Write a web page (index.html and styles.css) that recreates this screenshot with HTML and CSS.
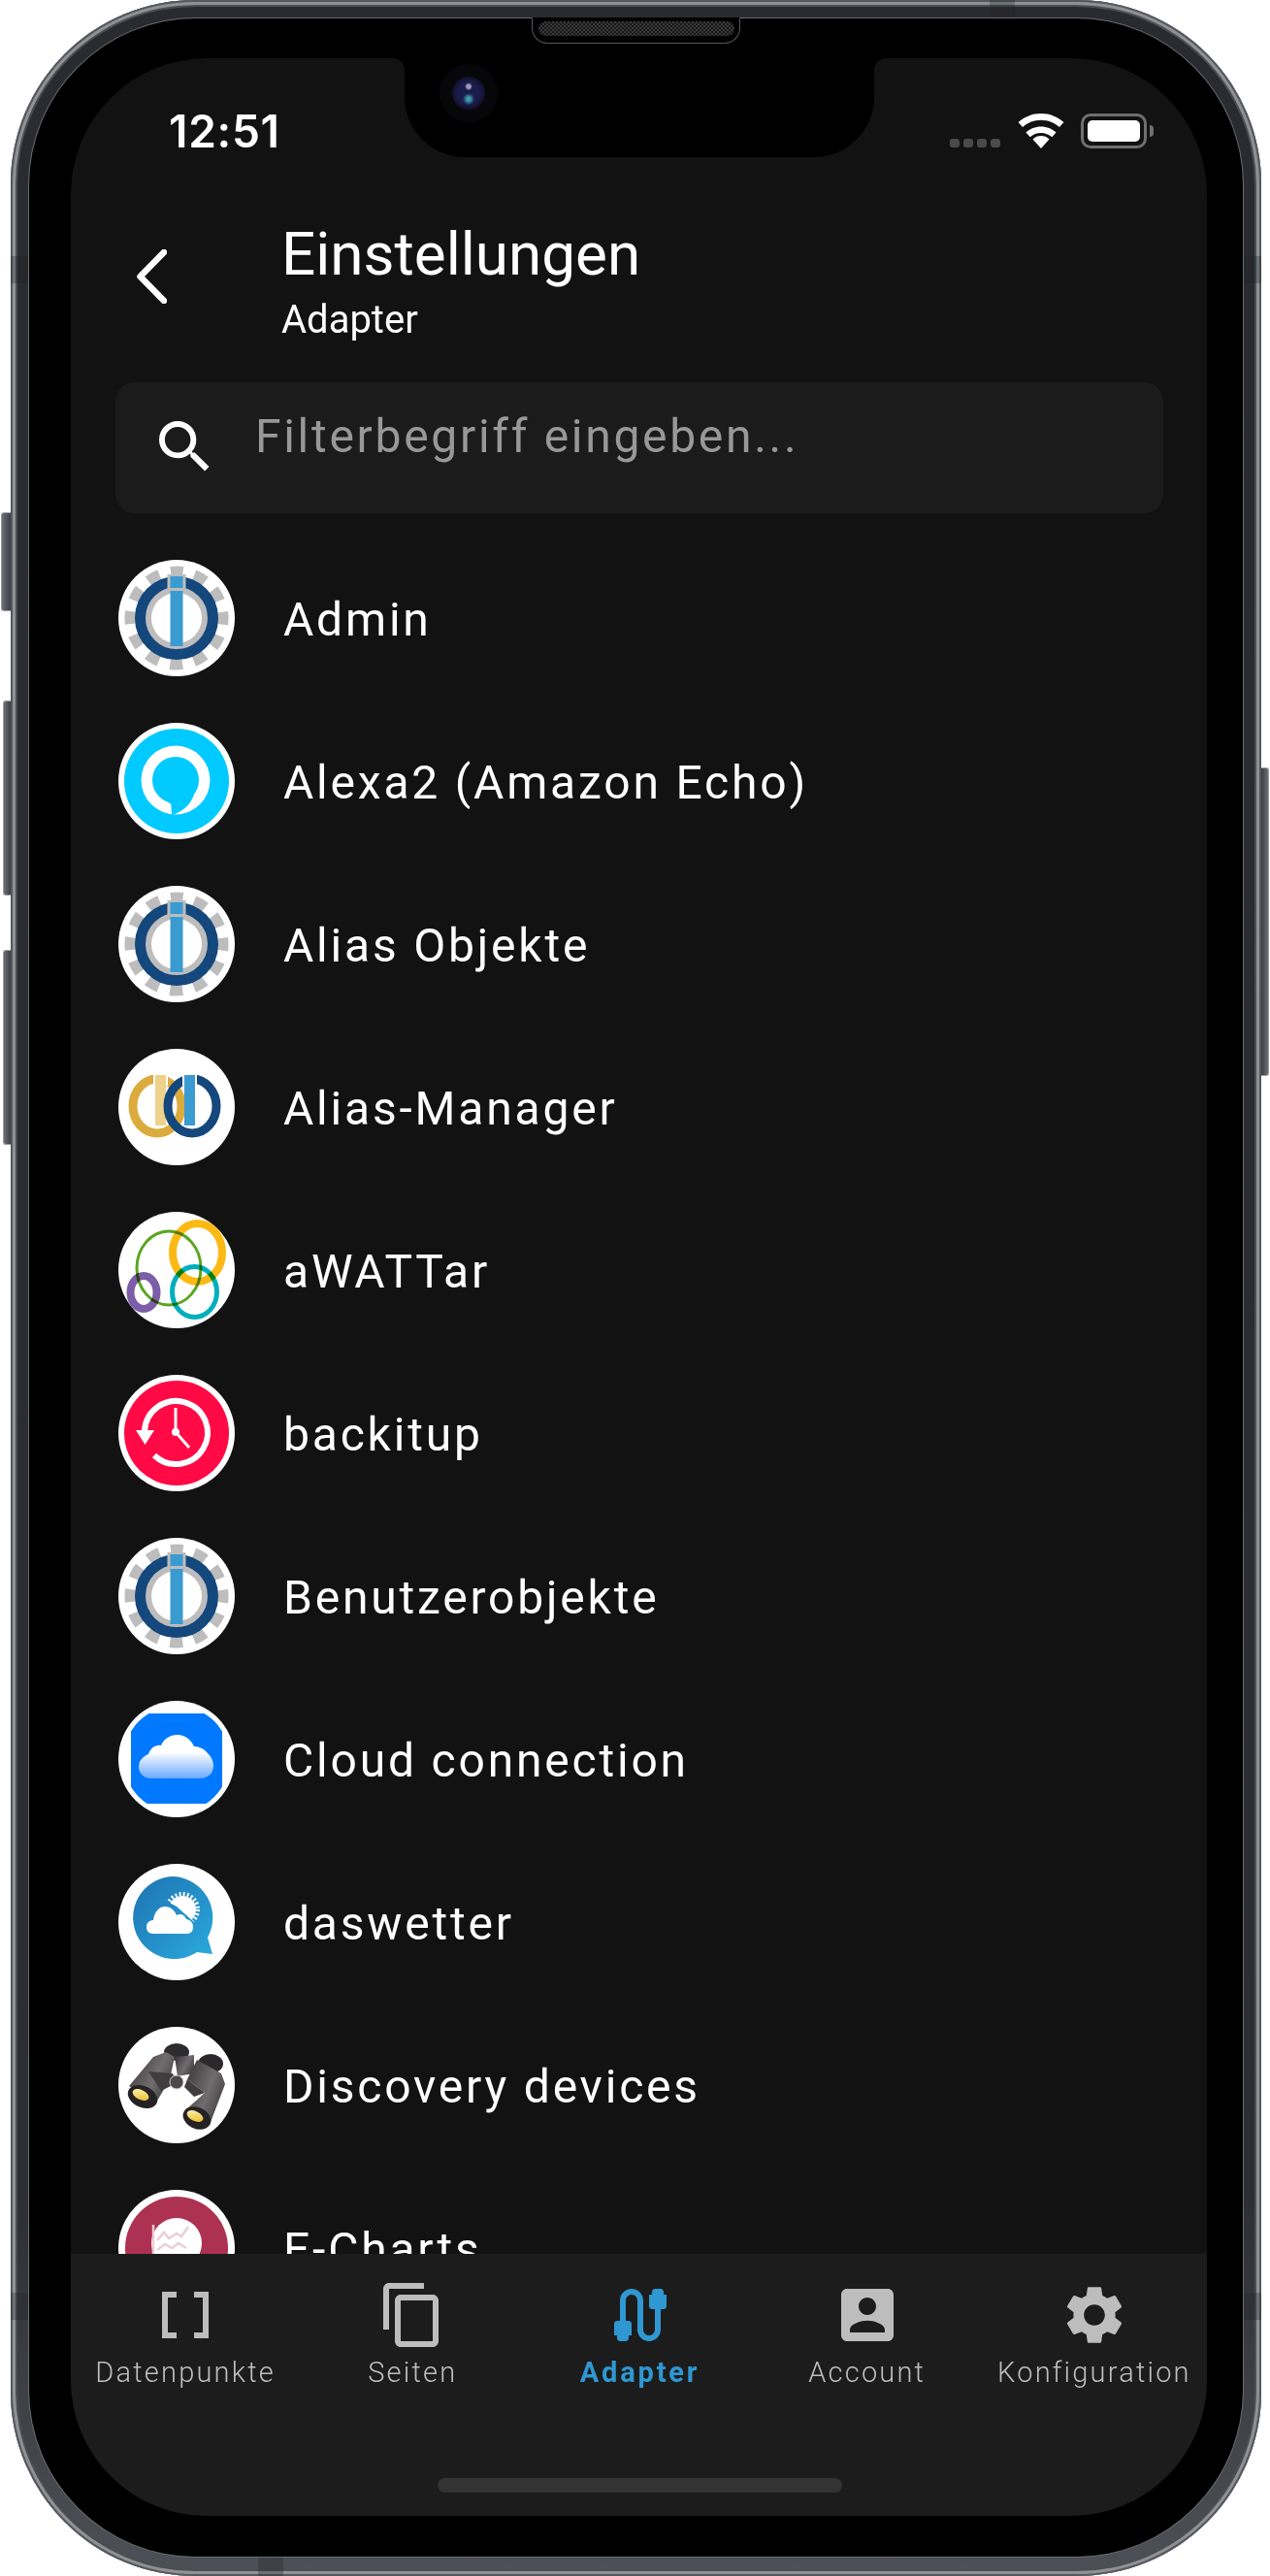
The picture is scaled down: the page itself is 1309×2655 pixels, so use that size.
FILE: index.html
```html
<!DOCTYPE html>
<html lang="de">
  <head>
    <meta charset="UTF-8" />
    <meta name="viewport" content="width=device-width, initial-scale=1.0" />
    <title>Einstellungen - Adapter</title>
    <link rel="stylesheet" href="styles.css">
  </head>
  <body>
    <svg class="defs" width="0" height="0">
      <defs>
        <symbol id="logo-iobroker" viewBox="0 0 120 120">
          <circle cx="60" cy="60" r="60" fill="#fff" />
          <circle cx="60" cy="60" r="45" fill="none" stroke="#bdbdbd" stroke-width="17" stroke-dasharray="12.3 11.26" stroke-dashoffset="6.1" transform="rotate(-90 60 60)" />
          <circle cx="60" cy="60" r="40" fill="#bdbdbd" />
          <circle cx="60" cy="60" r="37.5" fill="none" stroke="#14477c" stroke-width="11" />
          <circle cx="60" cy="60" r="26" fill="#fff" />
          <rect x="50.5" y="15" width="19" height="16" fill="#bdbdbd" />
          <rect x="53.5" y="17" width="13" height="12" fill="#3a9bd1" />
          <rect x="53.5" y="32" width="13" height="57" fill="#3a9bd1" />
        </symbol>
      </defs>
    </svg>

    <div class="phone">
      <span class="side-btn mute"></span>
      <span class="side-btn vol-up"></span>
      <span class="side-btn vol-down"></span>
      <span class="side-btn power"></span>
      <span class="band band-left-top"></span>
      <span class="band band-right-top"></span>
      <span class="band band-left-bottom"></span>
      <span class="band band-right-bottom"></span>
      <span class="band band-top"></span>
      <span class="band band-bottom"></span>

      <div class="bezel">
        <div class="speaker"><span class="grille"></span></div>

        <div class="screen">
          <div class="notch"><span class="camera"><span class="lens"></span></span></div>

          <div class="status-bar">
            <span class="time">12:51</span>
            <div class="status-icons">
              <span class="signal"><i></i><i></i><i></i><i></i></span>
              <svg class="wifi" viewBox="0 0 48 36">
                <path d="M24 36 15.5 26.4a12.5 12.5 0 0 1 17 0z" fill="#fff" />
                <path d="M24 13.5c-6 0-11.5 2.3-15.6 6l4.3 4.8A17 17 0 0 1 24 20c4.300 0 8.300 1.600 11.300 4.300l4.300-4.800c-4.100-3.700-9.600-6-15.600-6z" fill="#fff" />
                <path d="M24 0C15 0 6.800 3.400 .6 9l4.400 5A28 28 0 0 1 24 6.700c7.300 0 14 2.800 19 7.300l4.400-5C41.200 3.400 33 0 24 0z" fill="#fff" />
              </svg>
              <span class="battery"><span class="battery-fill"></span></span>
              <span class="battery-cap"></span>
            </div>
          </div>

          <div class="header">
            <svg class="back" viewBox="0 0 31 56">
              <path d="M28 3 3.500 28 28 53" fill="none" stroke="#fff" stroke-width="6.500" stroke-linecap="round" stroke-linejoin="round" />
            </svg>
            <div>
              <h1>Einstellungen</h1>
              <p>Adapter</p>
            </div>
          </div>

          <div class="search">
            <svg class="search-icon" viewBox="3 3 18 18">
              <path d="M15.500 14h-.79l-.28-.27A6.470 6.470 0 0 0 16 9.500 6.500 6.500 0 1 0 9.500 16c1.610 0 3.090-.59 4.230-1.570l.27.28v.79l5 4.990L20.490 19l-4.990-5zm-6 0C7.010 14 5 11.990 5 9.500S7.010 5 9.500 5 14 7.010 14 9.500 11.990 14 9.500 14z" fill="#fff" />
            </svg>
            <span class="placeholder">Filterbegriff eingeben...</span>
          </div>

          <div class="list">
            <div class="row">
              <svg class="logo"><use href="#logo-iobroker" /></svg>
              <span>Admin</span>
            </div>
            <div class="row">
              <svg class="logo" viewBox="0 0 120 120">
                <circle cx="60" cy="60" r="60" fill="#fff" />
                <circle cx="60" cy="60" r="54" fill="#00caff" />
                <circle cx="59" cy="59" r="35.500" fill="#fff" />
                <circle cx="59" cy="59" r="24" fill="#00caff" />
                <path d="M44 76 54.300 84 55 94.500 57.500 94.500C67 90 74 85 78 74z" fill="#00caff" />
              </svg>
              <span>Alexa2 (Amazon Echo)</span>
            </div>
            <div class="row">
              <svg class="logo"><use href="#logo-iobroker" /></svg>
              <span>Alias Objekte</span>
            </div>
            <div class="row">
              <svg class="logo" viewBox="0 0 120 120">
                <circle cx="60" cy="60" r="60" fill="#fff" />
                <ellipse cx="40" cy="59" rx="25" ry="28" fill="none" stroke="#dcab3d" stroke-width="9" />
                <rect x="36" y="24" width="15" height="14" fill="#fff" />
                <rect x="38" y="27" width="11" height="52" fill="#edd28c" />
                <ellipse cx="76" cy="59" rx="25" ry="28" fill="none" stroke="#14477c" stroke-width="9" />
                <rect x="66" y="24" width="15" height="14" fill="#fff" />
                <rect x="68" y="27" width="11" height="52" fill="#3a9bd1" />
              </svg>
              <span>Alias-Manager</span>
            </div>
            <div class="row">
              <svg class="logo" viewBox="0 0 120 120">
                <circle cx="60" cy="60" r="60" fill="#fff" />
                <ellipse class="overlap" cx="81.500" cy="42" rx="25.500" ry="30" fill="none" stroke="#fdb913" stroke-width="8" />
                <ellipse class="overlap" cx="52" cy="58" rx="33" ry="38" fill="none" stroke="#5aa51f" stroke-width="3" />
                <ellipse class="overlap" cx="78.500" cy="82.500" rx="23" ry="26" fill="none" stroke="#00aebd" stroke-width="5" />
                <ellipse class="overlap" cx="26" cy="83" rx="13.500" ry="17" fill="none" stroke="#7b5ea7" stroke-width="8" />
              </svg>
              <span>aWATTar</span>
            </div>
            <div class="row">
              <svg class="logo" viewBox="0 0 120 120">
                <circle cx="60" cy="60" r="60" fill="#fff" />
                <circle cx="60" cy="60" r="54" fill="#ff0a45" />
                <path d="M37 83A32.500 32.500 0 1 0 27 58" fill="none" stroke="#fff" stroke-width="6" />
                <path d="M18 57H37L27.500 72z" fill="#fff" />
                <path d="M59 34V59L73 75" fill="none" stroke="#fff" stroke-width="3" />
                <circle cx="59" cy="59" r="4" fill="#fff" />
              </svg>
              <span>backitup</span>
            </div>
            <div class="row">
              <svg class="logo"><use href="#logo-iobroker" /></svg>
              <span>Benutzerobjekte</span>
            </div>
            <div class="row">
              <svg class="logo" viewBox="0 0 120 120">
                <defs>
                  <linearGradient id="cloud-fade" x1="0" y1="0" x2="0" y2="1">
                    <stop offset=".4" stop-color="#fff" />
                    <stop offset="1" stop-color="#69a9ff" />
                  </linearGradient>
                  <clipPath id="cloud-clip"><circle cx="60" cy="60" r="55" /></clipPath>
                </defs>
                <circle cx="60" cy="60" r="60" fill="#fff" />
                <rect x="13" y="13" width="94" height="93" fill="#0078ff" clip-path="url(#cloud-clip)" />
                <path d="M33 80C26 80 21 74 21 68 21 61 26 57 31 55 33 49 38 45 44 46 47 39 53 35 61 35 69 35 75 40 78 47 83 47 88 49 92 54 96 58 98 62 98 67 98 75 92 80 84 80z" fill="url(#cloud-fade)" />
              </svg>
              <span>Cloud connection</span>
            </div>
            <div class="row">
              <svg class="logo" viewBox="0 0 120 120">
                <defs>
                  <linearGradient id="bubble" x1="0" y1="0" x2="1" y2="1">
                    <stop offset=".1" stop-color="#1f78b6" />
                    <stop offset="1" stop-color="#2aaadd" />
                  </linearGradient>
                  <clipPath id="sun-clip"><path d="M45 36 60 44 78 60 96 60 96 20 45 20z" /></clipPath>
                </defs>
                <circle cx="60" cy="60" r="60" fill="#fff" />
                <path d="M57 13A42.500 42.500 0 1 0 81 91L97 93 92 76A42.500 42.500 0 0 0 57 13z" fill="url(#bubble)" />
                <g clip-path="url(#sun-clip)">
                  <circle cx="66" cy="47" r="14" fill="#fff" />
                  <circle cx="66" cy="47" r="16" fill="none" stroke="#fff" stroke-width="4" stroke-dasharray="2 2.200" />
                </g>
                <path d="M36 72C31 72 29 69 29 65 29 61 32 58 36 58 37 50 42 44 48 44 54 44 58 48 60 53 64 51 68 52 70 57 75 58 77 61 77 65 77 69 75 72 71 72z" fill="#fff" />
              </svg>
              <span>daswetter</span>
            </div>
            <div class="row">
              <svg class="logo" viewBox="0 0 120 120">
                <defs>
                  <linearGradient id="barrel" x1="0" y1=".2" x2="1" y2=".8">
                    <stop offset="0" stop-color="#3d393b" />
                    <stop offset=".55" stop-color="#716d6f" />
                    <stop offset="1" stop-color="#383537" />
                  </linearGradient>
                  <linearGradient id="lens" x1="0" y1="0" x2="1" y2="1">
                    <stop offset="0" stop-color="#fff7c0" />
                    <stop offset="1" stop-color="#e9b81a" />
                  </linearGradient>
                </defs>
                <circle cx="60" cy="60" r="60" fill="#fff" />
                <ellipse cx="60" cy="26" rx="13" ry="9" fill="#2d2b2d" />
                <ellipse cx="95" cy="38" rx="13" ry="10" fill="#2a282a" />
                <path d="M58 31 78 29 78 48 61 51z" fill="url(#barrel)" />
                <path d="M36 31 49 26 58 31 53 54 39 78 11 61z" fill="url(#barrel)" />
                <path d="M81 34 106 48 110 59 94 101 69 86 89 68 71 54z" fill="url(#barrel)" />
                <path d="M31 46 56 48 60 58 44 66z" fill="#403d3f" />
                <path d="M71 54 89 68 78 72 68 62z" fill="#403d3f" />
                <circle cx="60" cy="57" r="7" fill="#4a484a" stroke="#c9c9c9" />
                <ellipse cx="25" cy="72" rx="16" ry="11" fill="#242224" transform="rotate(25 25 72)" />
                <ellipse cx="23" cy="70" rx="9" ry="5" fill="url(#lens)" transform="rotate(25 23 70)" />
                <ellipse cx="81" cy="94" rx="15" ry="11" fill="#242224" transform="rotate(25 81 94)" />
                <ellipse cx="79" cy="92" rx="9" ry="5" fill="url(#lens)" transform="rotate(25 79 92)" />
              </svg>
              <span>Discovery devices</span>
            </div>
            <div class="row">
              <svg class="logo" viewBox="0 0 120 120">
                <circle cx="60" cy="60" r="60" fill="#fff" />
                <circle cx="60" cy="60" r="53" fill="#ad3150" />
                <circle cx="60" cy="55" r="26" fill="#fff" />
                <path d="M36 36V70M40 52 47 44 52 50 60 45 65 48 72 38M40 62 48 56 55 60 62 55 70 60" fill="none" stroke="#eccdd6" stroke-width="2.500" />
              </svg>
              <span>E-Charts</span>
            </div>
          </div>

          <div class="tabbar">
            <div class="tab">
              <svg viewBox="0 0 24 24"><path d="M15 4v2h3v12h-3v2h5V4zM4 20h5v-2H6V6h3V4H4z" /></svg>
              <span>Datenpunkte</span>
            </div>
            <div class="tab">
              <svg viewBox="0 0 24 24"><path d="M16 1H4c-1.100 0-2 .9-2 2v14h2V3h12V1zm3 4H8c-1.100 0-2 .9-2 2v14c0 1.100.9 2 2 2h11c1.100 0 2-.9 2-2V7c0-1.100-.9-2-2-2zm0 16H8V7h11v14z" /></svg>
              <span>Seiten</span>
            </div>
            <div class="tab active">
              <svg viewBox="0 0 24 24"><path d="M20 5V4c0-.55-.45-1-1-1h-2c-.55 0-1 .45-1 1v1h-1v4c0 .55.45 1 1 1h1v7c0 1.100-.9 2-2 2s-2-.9-2-2V7c0-2.210-1.790-4-4-4S5 4.790 5 7v7H4c-.55 0-1 .45-1 1v4h1v1c0 .55.45 1 1 1h2c.55 0 1-.45 1-1v-1h1v-4c0-.55-.45-1-1-1H7V7c0-1.100.9-2 2-2s2 .9 2 2v10c0 2.210 1.790 4 4 4s4-1.790 4-4v-7h1c.55 0 1-.45 1-1V5h-1z" /></svg>
              <span>Adapter</span>
            </div>
            <div class="tab">
              <svg viewBox="0 0 24 24"><path d="M19 3H5c-1.110 0-2 .9-2 2v14c0 1.100.89 2 2 2h14c1.100 0 2-.9 2-2V5c0-1.100-.9-2-2-2zm-7 3c1.660 0 3 1.340 3 3s-1.340 3-3 3-3-1.340-3-3 1.340-3 3-3zm6 12H6v-1c0-2 4-3.100 6-3.100s6 1.100 6 3.100v1z" /></svg>
              <span>Account</span>
            </div>
            <div class="tab">
              <svg viewBox="0 0 24 24"><path d="M19.140 12.940c.04-.3.06-.61.06-.94 0-.32-.02-.64-.07-.94l2.030-1.580c.18-.14.23-.41.12-.61l-1.920-3.320c-.12-.22-.37-.29-.59-.22l-2.390.96c-.5-.38-1.030-.7-1.620-.94l-.36-2.540c-.04-.24-.24-.41-.48-.41h-3.840c-.24 0-.43.17-.47.41l-.36 2.540c-.59.24-1.130.57-1.620.94l-2.390-.96c-.22-.08-.47 0-.59.22L2.740 8.870c-.12.21-.08.47.12.61l2.030 1.580c-.05.3-.09.63-.09.94s.02.64.07.94l-2.030 1.580c-.18.14-.23.41-.12.61l1.920 3.320c.12.22.37.29.59.22l2.390-.96c.5.38 1.030.7 1.620.94l.36 2.540c.05.24.24.41.48.41h3.840c.24 0 .44-.17.47-.41l.36-2.540c.59-.24 1.130-.56 1.620-.94l2.390.96c.22.08.47 0 .59-.22l1.920-3.320c.12-.22.07-.47-.12-.61l-2.010-1.580zM12 15.600c-1.980 0-3.600-1.620-3.600-3.600s1.620-3.600 3.600-3.600 3.600 1.620 3.600 3.600-1.620 3.600-3.600 3.600z" /></svg>
              <span>Konfiguration</span>
            </div>
          </div>

          <div class="home-bar"></div>
        </div>
      </div>
    </div>
  </body>
</html>
```

FILE: styles.css
```css
* {
  box-sizing: border-box;
}
body {
  margin: 0;
  height: 2655px;
  overflow: hidden;
  background-color: #fff;
  font-family: Roboto, "Liberation Sans", sans-serif;
  color: #fff;
}
.defs {
  display: block;
  height: 0;
}

/* device frame */
.phone {
  position: relative;
  width: 1289px;
  height: 2655px;
  margin-left: 11px;
  padding: 19px 19px 20px 19px;
  border-radius: 190px;
  background: linear-gradient(#2a2b30, #2d2e33 85%, #4d5056);
  box-shadow:
    inset 0 0 0 2px #55585d,
    inset 0 0 0 5px #8f9195,
    inset 0 0 0 7px #4b4e53;
}
.side-btn {
  position: absolute;
  border: 1px solid #9a9ca0;
  border-right: 0;
  border-radius: 3px 0 0 3px;
  background: linear-gradient(90deg, #6c6f74, #3b3e44);
}
.mute {
  left: -10px;
  top: 528px;
  width: 10px;
  height: 102px;
}
.vol-up {
  left: -8px;
  top: 722px;
  width: 8px;
  height: 201px;
}
.vol-down {
  left: -8px;
  top: 979px;
  width: 8px;
  height: 201px;
}
.power {
  right: -8px;
  top: 791px;
  width: 8px;
  height: 318px;
  border: 1px solid #9a9ca0;
  border-left: 0;
  border-radius: 0 3px 3px 0;
  background: linear-gradient(270deg, #6c6f74, #3b3e44);
}
.band {
  position: absolute;
  background-color: rgba(30, 32, 36, 0.3);
}
.band-left-top,
.band-left-bottom {
  left: 0;
  width: 19px;
  height: 28px;
}
.band-right-top,
.band-right-bottom {
  right: 0;
  width: 19px;
  height: 28px;
}
.band-left-top,
.band-right-top {
  top: 264px;
}
.band-left-bottom,
.band-right-bottom {
  top: 2363px;
}
.band-top,
.band-bottom {
  width: 26px;
  height: 19px;
}
.band-top {
  left: 1009px;
  top: 0;
}
.band-bottom {
  left: 255px;
  bottom: 0;
}
.bezel {
  position: relative;
  height: 100%;
  padding: 41px 37px 42px 43px;
  border-radius: 172px;
  background-color: #000;
  box-shadow: 0 0 0 1px #6a6c70;
}
.speaker {
  position: absolute;
  left: 518px;
  top: -1px;
  width: 215px;
  height: 27px;
  border: 1px solid #55575b;
  border-top-color: #000;
  border-radius: 0 0 16px 16px;
  background-color: #000;
}
.grille {
  position: absolute;
  left: 6px;
  top: 3px;
  width: 202px;
  height: 15px;
  border-radius: 8px;
  background-color: #000;
  background-image: repeating-conic-gradient(#3a3a3a 0 25%, #161616 0 50%);
  background-size: 4px 4px;
}

/* screen */
.screen {
  position: relative;
  display: flex;
  flex-direction: column;
  height: 100%;
  overflow: hidden;
  border-radius: 140px;
  background-color: #121212;
}
.notch {
  position: absolute;
  left: 344px;
  top: 0;
  width: 484px;
  height: 102px;
  border-radius: 0 0 62px 62px;
  background-color: #000;
}
.notch::before,
.notch::after {
  content: "";
  position: absolute;
  top: 0;
  width: 14px;
  height: 14px;
}
.notch::before {
  left: -14px;
  background: radial-gradient(circle at 0 100%, transparent 14px, #000 15px);
}
.notch::after {
  right: -14px;
  background: radial-gradient(circle at 100% 100%, transparent 14px, #000 15px);
}
.camera {
  position: absolute;
  left: 36px;
  top: 6px;
  display: flex;
  align-items: center;
  justify-content: center;
  width: 60px;
  height: 60px;
  border-radius: 50%;
  background-color: #07070a;
}
.lens {
  width: 34px;
  height: 34px;
  border-radius: 50%;
  background:
    radial-gradient(circle at 50% 30%, #9a9ab8 0 2px, transparent 4px),
    radial-gradient(circle at 50% 68%, #3a9aa8 0 2px, transparent 6px),
    radial-gradient(circle, #1c1c4c 0 11px, #10102a 17px);
}
.status-bar {
  display: flex;
  justify-content: space-between;
  height: 119px;
  padding: 49px 55px 0 101px;
}
.time {
  font-family: Inter, sans-serif;
  font-size: 46px;
  font-weight: 600;
  line-height: 52px;
  letter-spacing: 0.7px;
}
.status-icons {
  display: flex;
  align-items: flex-start;
  height: 40px;
  margin-top: 8px;
}
.signal {
  display: flex;
  gap: 4px;
  margin-top: 26px;
  margin-right: 18px;
}
.signal i {
  width: 10px;
  height: 9px;
  border-radius: 3px;
  background-color: #4a4a4a;
}
.wifi {
  width: 48px;
  height: 36px;
  margin-right: 17px;
}
.battery {
  width: 68px;
  height: 36px;
  padding: 4px;
  border: 3px solid #6f6f6f;
  border-radius: 10px;
}
.battery-fill {
  display: block;
  height: 100%;
  border-radius: 5px;
  background-color: #fff;
}
.battery-cap {
  width: 4px;
  height: 12px;
  margin-top: 12px;
  margin-left: 3px;
  border-radius: 0 4px 4px 0;
  background-color: #6f6f6f;
}

/* header */
.header {
  display: flex;
  align-items: flex-start;
  height: 215px;
  padding-left: 68px;
}
.back {
  width: 31px;
  height: 56px;
  margin-top: 78px;
  margin-right: 118px;
}
.header h1 {
  margin: 0;
  padding-top: 47px;
  font-size: 62px;
  font-weight: 400;
  line-height: 72px;
}
.header p {
  margin: 0;
  padding-top: 7px;
  font-size: 40px;
  font-weight: 400;
  line-height: 50px;
}
.search {
  display: flex;
  flex-shrink: 0;
  align-items: flex-start;
  height: 135px;
  margin: 0 45px 0 46px;
  border-radius: 20px;
  background-color: #1b1b1b;
}
.search-icon {
  width: 53px;
  height: 53px;
  margin-top: 40px;
  margin-left: 45px;
}
.placeholder {
  margin-top: 28px;
  margin-left: 46px;
  font-size: 48px;
  line-height: 56px;
  letter-spacing: 2.700px;
  color: #989898;
}

/* adapter list */
.list {
  flex: 1;
  min-height: 0;
  overflow: hidden;
  padding-top: 24px;
}
.row {
  display: flex;
  align-items: center;
  gap: 50px;
  height: 168px;
  padding-left: 49px;
  font-size: 48px;
  letter-spacing: 2.800px;
}
.row span {
  padding-top: 2px;
}
.logo {
  flex-shrink: 0;
  width: 120px;
  height: 120px;
}
.overlap {
  mix-blend-mode: multiply;
}

/* bottom navigation */
.tabbar {
  display: flex;
  flex-shrink: 0;
  height: 270px;
  padding-top: 27px;
  background-color: #1c1c1c;
}
.tab {
  display: flex;
  flex: 1;
  flex-direction: column;
  align-items: center;
  padding-left: 2px;
  font-size: 29px;
  font-weight: 300;
  letter-spacing: 2.200px;
  color: #bdbdbd;
}
.tab svg {
  width: 72px;
  height: 72px;
  margin-bottom: 6px;
  fill: #bdbdbd;
}
.tab.active {
  font-weight: 700;
  letter-spacing: 2.800px;
  color: #2f97d1;
}
.tab.active svg {
  fill: #2f97d1;
}
.home-bar {
  position: absolute;
  left: 378px;
  bottom: 24px;
  width: 417px;
  height: 15px;
  border-radius: 8px;
  background-color: #333;
}
```
